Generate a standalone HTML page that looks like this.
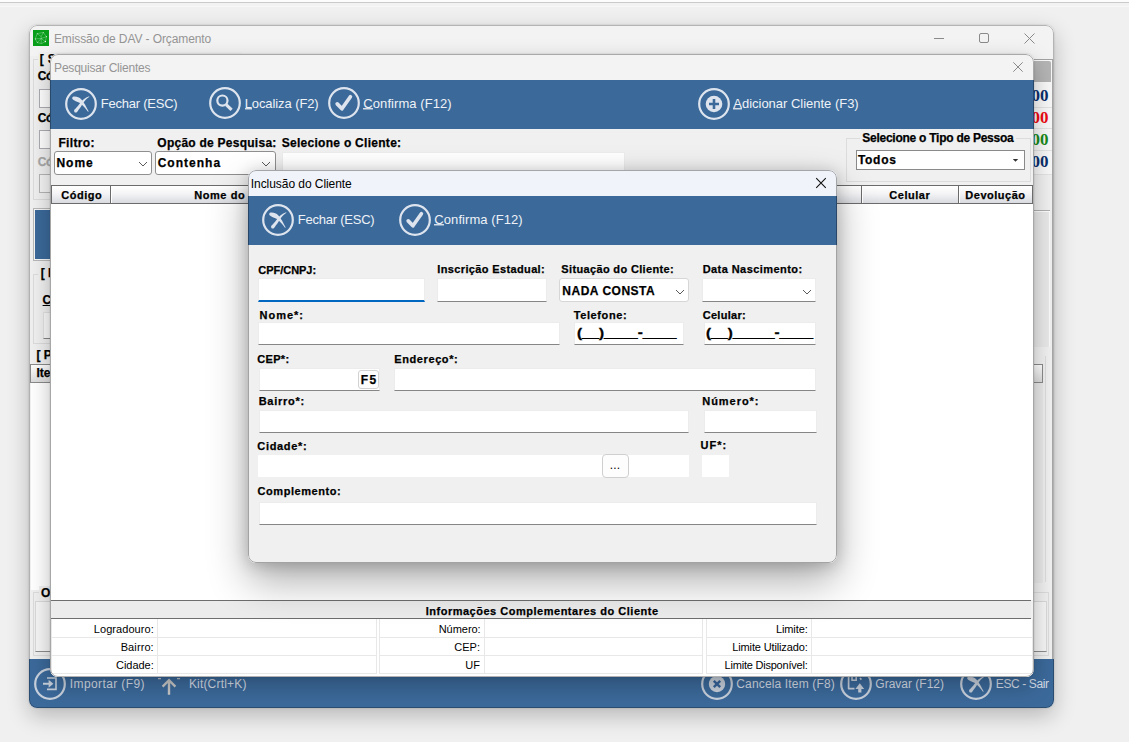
<!DOCTYPE html>
<html lang="pt-BR"><head><meta charset="utf-8"><title>Emissão de DAV - Orçamento</title>
<style>
html,body{margin:0;padding:0}
body{width:1129px;height:742px;overflow:hidden;background:#f0f0f0;position:relative;font-family:'Liberation Sans',sans-serif;}
.win{position:absolute;overflow:hidden;border-radius:8px;background:#f0f0f0}
.win>div,.win>svg,.win>span{position:absolute}
.sh{position:absolute;border-radius:8px}
.win>.bd{left:0;top:0;right:0;bottom:0;border:1px solid;border-radius:8px;box-sizing:border-box}
.t{white-space:pre;line-height:1;display:block}
u{text-decoration:none;background-image:linear-gradient(rgba(238,242,247,.85),rgba(238,242,247,.85)),linear-gradient(rgba(238,242,247,.4),rgba(238,242,247,.4));background-size:100% 1px,100% 1px;background-position:0 12px,0 13px;background-repeat:no-repeat}
</style></head><body>
<div style="position:absolute;left:0;top:0;width:1129px;height:2px;background:#fcfcfc"></div>
<div style="position:absolute;left:0;top:2px;width:1129px;height:1px;background:#cacaca"></div>
<div style="position:absolute;left:0;top:3px;width:1129px;height:3px;background:#f2f2f2"></div>
<div style="position:absolute;left:0;top:6px;width:1129px;height:1px;background:#f7f7f7"></div>
<div class="sh" style="left:29px;top:25px;width:1025px;height:683px;box-shadow:0 8px 22px rgba(0,0,0,.24),0 0 2px rgba(0,0,0,.2)"></div>
<div class="win" id="w1" style="left:29px;top:25px;width:1025px;height:683px">
<div style="left:0px;top:0px;width:1025px;height:31px;background:#f3f3f3"></div>
<svg style="left:4px;top:5px" width="16" height="16" viewBox="0 0 16 16"><rect width="16" height="16" fill="#089e1a"/><g fill="none" stroke="#fff" stroke-opacity=".38" stroke-width=".7"><path d="M4.2,3.6 L10.3,2.5 L13.4,6.6 L12.4,11.6 L8.3,13.6 L4.3,12.5 L2.2,8.9 Z"/><path d="M8.2,6.5 V13.4 M2.2,8.9 L8.2,8.5 L13.4,6.6 M8.2,8.5 L12.4,11.6 M4.2,3.6 L8.2,6.5 L10.3,2.5 M4.3,12.5 L8.2,8.5"/></g><g fill="#fff"><circle cx="12.4" cy="11.6" r=".65"/><circle cx="13.4" cy="6.6" r=".55" fill-opacity=".75"/><circle cx="4.3" cy="3.7" r=".55" fill-opacity=".6"/><circle cx="10.3" cy="2.6" r=".5" fill-opacity=".55"/><circle cx="2.4" cy="8.9" r=".6" fill-opacity=".5"/><circle cx="4.4" cy="12.4" r=".5" fill-opacity=".5"/></g></svg>
<span class="t" style="left:24.9px;top:8.0px;font-size:12px;letter-spacing:-0.098px;color:#959595;">Emissão de DAV - Orçamento</span>
<svg style="left:901px;top:4px" width="110" height="20" viewBox="0 0 110 20"><g stroke="#8a8a8a" stroke-width="1" fill="none"><path d="M4,9.5 H14"/><rect x="49.5" y="4.5" width="9" height="9" rx="1.5"/><path d="M94.5,4.5 L104.5,14.5 M104.5,4.5 L94.5,14.5"/></g></svg>
<div style="left:4px;top:34px;width:1016px;height:141px;border:1px solid #dcdcdc;box-sizing:border-box"></div>
<div style="left:9px;top:27px;width:204px;height:16px;background:#f0f0f0"></div>
<span class="t" style="left:10.8px;top:28.0px;font-size:12px;font-weight:bold;-webkit-text-stroke:.25px;letter-spacing:0.334px;color:#000;">[ Selecione o Vendedor / Cliente ]</span>
<span class="t" style="left:8.8px;top:45.0px;font-size:12px;font-weight:bold;-webkit-text-stroke:.25px;letter-spacing:-0.488px;color:#000;">Código:</span>
<div style="left:10px;top:64px;width:161px;height:18.5px;background:#fff;border:1px solid #abadb3;box-sizing:border-box"></div>
<span class="t" style="left:8.8px;top:87.0px;font-size:12px;font-weight:bold;-webkit-text-stroke:.25px;letter-spacing:-0.488px;color:#000;">Código:</span>
<div style="left:10px;top:105px;width:161px;height:18.5px;background:#fff;border:1px solid #abadb3;box-sizing:border-box"></div>
<span class="t" style="left:8.8px;top:131.0px;font-size:12px;font-weight:bold;-webkit-text-stroke:.25px;letter-spacing:-0.488px;color:#a8a8a8;">Código:</span>
<div style="left:10px;top:149px;width:161px;height:18.5px;background:#f4f4f4;border:1px solid #b5b5b5;box-sizing:border-box"></div>
<div style="left:4px;top:183px;width:997px;height:53px;background:#f6f6f6;border:1px solid #b8b8b8;box-sizing:border-box"></div>
<div style="left:6px;top:185px;width:993px;height:49px;background:#3b699a"></div>
<div style="left:4px;top:249px;width:1012px;height:70px;border:1px solid #dcdcdc;box-sizing:border-box"></div>
<div style="left:9px;top:241px;width:162px;height:16px;background:#f0f0f0"></div>
<span class="t" style="left:11.7px;top:242.0px;font-size:12px;font-weight:bold;-webkit-text-stroke:.25px;color:#000;">[ Produto ]</span>
<span class="t" style="left:13.6px;top:269.0px;font-size:12px;font-weight:bold;-webkit-text-stroke:.25px;color:#000;text-decoration:underline;">Código</span>
<div style="left:14px;top:287px;width:157px;height:27px;background:#fafafa;border:1px solid #e2e2e2;border-bottom-color:#868686;box-sizing:border-box"></div>
<span class="t" style="left:7.4px;top:324.0px;font-size:12px;font-weight:bold;-webkit-text-stroke:.25px;color:#000;">[ Produtos ]</span>
<div style="left:1015px;top:331px;width:2px;height:226px;border-right:1px solid #dcdcdc;box-sizing:border-box"></div>
<div style="left:1px;top:339px;width:1013px;height:19px;background:linear-gradient(#fff,#dcdcdc);border:1px solid #8a8a8a;box-sizing:border-box"></div>
<span class="t" style="left:7.4px;top:342.0px;font-size:12px;font-weight:bold;-webkit-text-stroke:.25px;color:#000;">Item</span>
<div style="left:2px;top:358px;width:1002px;height:207px;background:#fff"></div>
<div style="left:1004px;top:358px;width:10px;height:200px;background:#e9e9e9"></div>
<div style="left:1004px;top:31px;width:21px;height:3px;background:#f3f3f3"></div>
<div style="left:1004px;top:34px;width:20px;height:1px;background:#a2a2a2"></div>
<div style="left:1004px;top:35px;width:19px;height:151px;background:#f8f8f8"></div>
<div style="left:1023px;top:35px;width:1px;height:599px;background:#a6a6a6"></div>
<div style="left:1004px;top:36px;width:17.5px;height:21px;background:#b4b4b4;border-radius:0 2px 0 0"></div>
<span class="t" style="left:989.8px;top:62.0px;font-size:17px;font-weight:bold;color:#0b2f6b;font-family:'Liberation Serif',serif;">0,00</span>
<span class="t" style="left:989.8px;top:84.0px;font-size:17px;font-weight:bold;color:#ee0a12;font-family:'Liberation Serif',serif;">0,00</span>
<span class="t" style="left:989.8px;top:106.0px;font-size:17px;font-weight:bold;color:#1a8a1a;font-family:'Liberation Serif',serif;">0,00</span>
<span class="t" style="left:989.8px;top:128.0px;font-size:17px;font-weight:bold;color:#0b2f6b;font-family:'Liberation Serif',serif;">0,00</span>
<div style="left:1004px;top:82px;width:19px;height:1px;background:#e3e3e3"></div>
<div style="left:1004px;top:103px;width:19px;height:1px;background:#e3e3e3"></div>
<div style="left:1004px;top:125px;width:19px;height:1px;background:#e3e3e3"></div>
<div style="left:1004px;top:149px;width:19px;height:1px;background:#e3e3e3"></div>
<div style="left:1004px;top:150px;width:19px;height:36px;background:#f0f0f0"></div>
<div style="left:1004px;top:185px;width:17px;height:2px;border-top:1px solid #b0b0b0;border-bottom:1px solid #fdfdfd;box-sizing:border-box"></div>
<div style="left:1004px;top:187px;width:17px;height:135px;background:#e8e8e8;border-right:1px solid #fafafa;box-sizing:border-box"></div>
<div style="left:4px;top:567px;width:1016px;height:64px;border:1px solid #dcdcdc;box-sizing:border-box"></div>
<div style="left:10px;top:561px;width:81px;height:14px;background:#f0f0f0"></div>
<span class="t" style="left:11.9px;top:562.0px;font-size:12px;font-weight:bold;-webkit-text-stroke:.25px;color:#000;">Observação</span>
<div style="left:6px;top:576px;width:1012px;height:51px;background:#f6f6f6;border:1px solid #d9d9d9;border-bottom-color:#8c8c8c;box-sizing:border-box"></div>
<div style="left:0px;top:634px;width:1025px;height:49px;background:#3b699a"></div>
<svg style="left:3.9px;top:642px" width="34" height="34" viewBox="0 0 34 34"><circle cx="17" cy="17" r="14.8" fill="none" stroke="#c7d0dc" stroke-width="2.2"/><path d="M14,11 H23 V22.4 H14" fill="none" stroke="#c7d0dc" stroke-width="1.6"/><path d="M10,16.8 H16" stroke="#c7d0dc" stroke-width="2"/><path d="M15.6,12.8 L20.4,16.8 L15.6,20.8 Z" fill="#c7d0dc"/></svg>
<span class="t" style="left:40.8px;top:653.0px;font-size:12px;letter-spacing:0.390px;color:#d3dbe6;">Importar (F9)</span>
<svg style="left:127px;top:651px" width="26" height="22" viewBox="0 0 26 22"><path d="M13,18.8 V4 M6.6,10.6 L13,4.2 L19.4,10.6" fill="none" stroke="#c8c8c8" stroke-width="2.4"/><path d="M2,2.6 H5 M21,2.6 H24" stroke="#b9c0c9" stroke-width="1.2"/></svg>
<span class="t" style="left:159.9px;top:653.0px;font-size:12px;letter-spacing:0.183px;color:#d3dbe6;">Kit(Crtl+K)</span>
<svg style="left:671px;top:642px" width="34" height="34" viewBox="0 0 34 34"><circle cx="17" cy="17" r="14.8" fill="none" stroke="#c7d0dc" stroke-width="2.2"/><circle cx="17" cy="17" r="8.2" fill="#c7d0dc"/><path d="M13.8,13.8 L20.2,20.2 M20.2,13.8 L13.8,20.2" stroke="#37649a" stroke-width="2.4"/></svg>
<span class="t" style="left:707.3px;top:653.0px;font-size:12px;letter-spacing:0.148px;color:#d3dbe6;">Cancela Item (F8)</span>
<svg style="left:810px;top:642px" width="34" height="34" viewBox="0 0 34 34"><circle cx="17" cy="17" r="14.8" fill="none" stroke="#c7d0dc" stroke-width="2.2"/><path d="M18.5,9.2 H9.6 V21.6 H15.5" fill="none" stroke="#c7d0dc" stroke-width="1.7" stroke-linejoin="round"/><path d="M13,9.5 V13.2 H17.2 V9.5" fill="none" stroke="#c7d0dc" stroke-width="1.5"/><path d="M21,11 L22.4,12.6" stroke="#c7d0dc" stroke-width="1.6"/><path d="M20.8,16.2 L25.2,22 H22.4 V25.6 H19.2 V22 H16.4 Z" fill="#c7d0dc"/></svg>
<span class="t" style="left:846.3px;top:653.0px;font-size:12px;color:#d3dbe6;">Gravar (F12)</span>
<svg style="left:930px;top:642px" width="34" height="34" viewBox="0 0 34 34"><circle cx="17" cy="17" r="14.8" fill="none" stroke="#c7d0dc" stroke-width="2.2"/><path fill="#c7d0dc" d="M8.2,11 C8.4,9.8 9.4,9.5 10.4,9.5 C12,9.5 13.4,9.7 14.8,10.4 C16.2,11.1 17.2,12 18.2,13.4 C19.4,15 20.2,16.2 21,17.6 C22.2,19.8 23.4,22.2 24.7,24.5 L24,24.8 C22.8,23.2 21.8,22 20.6,20.6 C19.4,19.2 18.4,18 17.2,16.9 C16,16 15,15.4 13.6,14.9 C12.4,14.4 11.2,14 10,13.3 C9,12.7 8.1,12 8.2,11 Z"/><path fill="#c7d0dc" d="M25.1,9.2 C22.8,10 20.8,11.2 19,12.8 C17.9,13.8 17.1,14.8 16.4,15.8 C15.6,16.9 14.8,17.9 13.9,18.9 C12.7,20.3 11.3,21.6 10.5,22.6 C10,23.3 9.9,24 10.3,24.7 C10.7,25.5 11.6,25.9 12.4,25.4 C13,25 13.3,24.7 13.6,24.2 C14.6,22.9 15.4,21.8 16.4,20.5 C17.4,19 18.2,17.6 19.2,16.1 C20.6,14 22.6,11.6 25.4,9.7 Z"/></svg>
<span class="t" style="left:966.8px;top:653.0px;font-size:12px;letter-spacing:-0.388px;color:#d3dbe6;">ESC - Sair</span>
<div class="bd" style="border-color:rgba(0,0,0,.26)"></div>
</div>
<div class="sh" style="left:50px;top:54px;width:984px;height:623px;box-shadow:0 8px 22px rgba(0,0,0,.26),0 0 2px rgba(0,0,0,.2)"></div>
<div class="win" id="w2" style="left:50px;top:54px;width:984px;height:623px">
<div style="left:0px;top:0px;width:984px;height:26px;background:#f3f3f3"></div>
<span class="t" style="left:4.1px;top:8.0px;font-size:12px;letter-spacing:-0.215px;color:#959595;">Pesquisar Clientes</span>
<svg style="left:962px;top:7px" width="12" height="12" viewBox="0 0 12 12"><path d="M1.3,1.3 L10.7,10.7 M10.7,1.3 L1.3,10.7" stroke="#8a8a8a" stroke-width="1"/></svg>
<div style="left:0px;top:26px;width:984px;height:49px;background:#3b699a"></div>
<svg style="left:14.1px;top:32.8px" width="34" height="34" viewBox="0 0 34 34"><circle cx="17" cy="17" r="14.8" fill="none" stroke="#dde4ee" stroke-width="2.2"/><path fill="#dde4ee" d="M8.2,11 C8.4,9.8 9.4,9.5 10.4,9.5 C12,9.5 13.4,9.7 14.8,10.4 C16.2,11.1 17.2,12 18.2,13.4 C19.4,15 20.2,16.2 21,17.6 C22.2,19.8 23.4,22.2 24.7,24.5 L24,24.8 C22.8,23.2 21.8,22 20.6,20.6 C19.4,19.2 18.4,18 17.2,16.9 C16,16 15,15.4 13.6,14.9 C12.4,14.4 11.2,14 10,13.3 C9,12.7 8.1,12 8.2,11 Z"/><path fill="#dde4ee" d="M25.1,9.2 C22.8,10 20.8,11.2 19,12.8 C17.9,13.8 17.1,14.8 16.4,15.8 C15.6,16.9 14.8,17.9 13.9,18.9 C12.7,20.3 11.3,21.6 10.5,22.6 C10,23.3 9.9,24 10.3,24.7 C10.7,25.5 11.6,25.9 12.4,25.4 C13,25 13.3,24.7 13.6,24.2 C14.6,22.9 15.4,21.8 16.4,20.5 C17.4,19 18.2,17.6 19.2,16.1 C20.6,14 22.6,11.6 25.4,9.7 Z"/></svg>
<span class="t" style="left:50.7px;top:43.0px;font-size:13px;letter-spacing:-0.224px;color:#eef2f7;">Fechar (ESC)</span>
<svg style="left:158.2px;top:32.1px" width="34" height="34" viewBox="0 0 34 34"><circle cx="17" cy="17" r="14.8" fill="none" stroke="#dde4ee" stroke-width="2.2"/><circle cx="14.4" cy="14.6" r="5.1" fill="none" stroke="#dde4ee" stroke-width="2.2"/><path d="M18.4,18.8 L23.6,23.8" stroke="#dde4ee" stroke-width="3.2" stroke-linecap="butt"/></svg>
<span class="t" style="left:194.7px;top:43.0px;font-size:13px;letter-spacing:-0.095px;color:#eef2f7;"><u>L</u>ocaliza (F2)</span>
<svg style="left:277px;top:32.1px" width="34" height="34" viewBox="0 0 34 34"><circle cx="17" cy="17" r="14.8" fill="none" stroke="#dde4ee" stroke-width="2.2"/><path d="M10.2,17.9 L14.9,22.8 L23.4,10.7" fill="none" stroke="#dde4ee" stroke-width="3.7" stroke-linecap="round" stroke-linejoin="round"/></svg>
<span class="t" style="left:313.3px;top:43.0px;font-size:13px;letter-spacing:0.075px;color:#eef2f7;"><u>C</u>onfirma (F12)</span>
<svg style="left:646.9px;top:32.9px" width="34" height="34" viewBox="0 0 34 34"><circle cx="17" cy="17" r="14.8" fill="none" stroke="#dde4ee" stroke-width="2.2"/><circle cx="17" cy="17" r="8.3" fill="#dde4ee"/><path d="M12,17 H22 M17,12 V22" stroke="#3b699a" stroke-width="2.6"/></svg>
<span class="t" style="left:683.3px;top:43.0px;font-size:13px;letter-spacing:-0.015px;color:#eef2f7;"><u>A</u>dicionar Cliente (F3)</span>
<div style="left:0px;top:75px;width:984px;height:56px;background:#f0f0f0"></div>
<span class="t" style="left:8.4px;top:83.0px;font-size:12px;font-weight:bold;-webkit-text-stroke:.25px;letter-spacing:0.350px;color:#000;">Filtro:</span>
<div style="left:4px;top:97px;width:98px;height:24px;background:#fff;border:1px solid #8f8f8f;border-radius:3px;box-sizing:border-box"></div>
<span class="t" style="left:6.4px;top:103.0px;font-size:12px;font-weight:bold;-webkit-text-stroke:.25px;letter-spacing:1.019px;color:#000;">Nome</span>
<svg style="left:88px;top:107px" width="10" height="6" viewBox="0 0 10 6"><path d="M1,1 L5,5 L9,1" fill="none" stroke="#5a5a5a" stroke-width="1"/></svg>
<span class="t" style="left:107.3px;top:83.0px;font-size:12px;font-weight:bold;-webkit-text-stroke:.25px;letter-spacing:0.253px;color:#000;">Opção de Pesquisa:</span>
<div style="left:105px;top:97px;width:121px;height:24px;background:#fff;border:1px solid #8f8f8f;border-radius:3px;box-sizing:border-box"></div>
<span class="t" style="left:107.7px;top:103.0px;font-size:12px;font-weight:bold;-webkit-text-stroke:.25px;letter-spacing:1.008px;color:#000;">Contenha</span>
<svg style="left:211px;top:107px" width="10" height="6" viewBox="0 0 10 6"><path d="M1,1 L5,5 L9,1" fill="none" stroke="#5a5a5a" stroke-width="1"/></svg>
<span class="t" style="left:231.7px;top:83.0px;font-size:12px;font-weight:bold;-webkit-text-stroke:.25px;letter-spacing:0.283px;color:#000;">Selecione o Cliente:</span>
<div style="left:232px;top:98px;width:343px;height:23px;background:#fff;border:1px solid #ececec;box-sizing:border-box"></div>
<div style="left:796px;top:84px;width:185px;height:44px;border:1px solid #dcdcdc;box-sizing:border-box"></div>
<div style="left:810px;top:77px;width:156px;height:15px;background:#f0f0f0"></div>
<span class="t" style="left:812.3px;top:78.0px;font-size:12px;font-weight:bold;-webkit-text-stroke:.25px;letter-spacing:-0.258px;color:#000;">Selecione o Tipo de Pessoa</span>
<div style="left:806px;top:96px;width:169px;height:20px;background:#fff;border:1px solid #8a8a8a;box-sizing:border-box"></div>
<span class="t" style="left:807.9px;top:100.0px;font-size:12px;font-weight:bold;-webkit-text-stroke:.25px;letter-spacing:0.723px;color:#000;">Todos</span>
<svg style="left:962px;top:104px" width="7" height="5" viewBox="0 0 7 5"><path d="M0.8,1 H6.2 L3.5,3.8 Z" fill="#333"/></svg>
<div style="left:1px;top:131px;width:982px;height:19px;background:linear-gradient(#ffffff,#f4f4f6 45%,#d9dbe0);border-top:1px solid #6b6b6b;border-bottom:1px solid #6b6b6b;border-left:1px solid #6b6b6b;box-sizing:border-box"></div>
<div style="left:60px;top:132px;width:2px;height:17px;border-left:1px solid #6b6b6b;border-right:1px solid #fff;box-sizing:border-box"></div>
<div style="left:322px;top:132px;width:2px;height:17px;border-left:1px solid #6b6b6b;border-right:1px solid #fff;box-sizing:border-box"></div>
<div style="left:510px;top:132px;width:2px;height:17px;border-left:1px solid #6b6b6b;border-right:1px solid #fff;box-sizing:border-box"></div>
<div style="left:650px;top:132px;width:2px;height:17px;border-left:1px solid #6b6b6b;border-right:1px solid #fff;box-sizing:border-box"></div>
<div style="left:811px;top:132px;width:2px;height:17px;border-left:1px solid #6b6b6b;border-right:1px solid #fff;box-sizing:border-box"></div>
<div style="left:908px;top:132px;width:2px;height:17px;border-left:1px solid #6b6b6b;border-right:1px solid #fff;box-sizing:border-box"></div>
<div style="left:982px;top:132px;width:2px;height:17px;border-left:1px solid #6b6b6b;border-right:1px solid #fff;box-sizing:border-box"></div>
<span class="t" style="left:11.3px;top:135.5px;font-size:11px;font-weight:bold;-webkit-text-stroke:.25px;letter-spacing:0.502px;color:#000;">Código</span>
<span class="t" style="left:144.3px;top:135.5px;font-size:11px;font-weight:bold;-webkit-text-stroke:.25px;letter-spacing:0.543px;color:#000;">Nome do Cliente</span>
<span class="t" style="left:839.3px;top:135.5px;font-size:11px;font-weight:bold;-webkit-text-stroke:.25px;letter-spacing:0.517px;color:#000;">Celular</span>
<span class="t" style="left:915.3px;top:135.5px;font-size:11px;font-weight:bold;-webkit-text-stroke:.25px;letter-spacing:0.520px;color:#000;">Devolução</span>
<div style="left:1px;top:150px;width:982px;height:396px;background:#fff"></div>
<div style="left:1px;top:546px;width:980px;height:19px;background:#ececec;border-top:1px solid #6e6e6e;border-bottom:1px solid #6e6e6e;box-sizing:border-box"></div>
<span class="t" style="left:375.7px;top:551.5px;font-size:11px;font-weight:bold;-webkit-text-stroke:.25px;letter-spacing:0.512px;color:#000;">Informações Complementares do Cliente</span>
<div style="left:1px;top:565px;width:982px;height:59px;background:#fff"></div>
<div style="left:1px;top:565px;width:326px;height:55px;border:1px solid #e8e8e8;border-top:none;box-sizing:border-box"></div>
<div style="left:107px;top:565px;width:1px;height:54px;background:#e8e8e8"></div>
<div style="left:1px;top:583px;width:326px;height:1px;background:#e8e8e8"></div>
<div style="left:1px;top:601px;width:326px;height:1px;background:#e8e8e8"></div>
<div style="left:329px;top:565px;width:324px;height:55px;border:1px solid #e8e8e8;border-top:none;box-sizing:border-box"></div>
<div style="left:434px;top:565px;width:1px;height:54px;background:#e8e8e8"></div>
<div style="left:329px;top:583px;width:324px;height:1px;background:#e8e8e8"></div>
<div style="left:329px;top:601px;width:324px;height:1px;background:#e8e8e8"></div>
<div style="left:656px;top:565px;width:327px;height:55px;border:1px solid #e8e8e8;border-top:none;box-sizing:border-box"></div>
<div style="left:761px;top:565px;width:1px;height:54px;background:#e8e8e8"></div>
<div style="left:656px;top:583px;width:327px;height:1px;background:#e8e8e8"></div>
<div style="left:656px;top:601px;width:327px;height:1px;background:#e8e8e8"></div>
<span class="t" style="left:43.8px;top:569.5px;font-size:11px;letter-spacing:0.057px;color:#000;">Logradouro:</span>
<span class="t" style="left:70.7px;top:587.5px;font-size:11px;letter-spacing:0.099px;color:#000;">Bairro:</span>
<span class="t" style="left:66.0px;top:605.5px;font-size:11px;letter-spacing:-0.037px;color:#000;">Cidade:</span>
<span class="t" style="left:388.7px;top:569.5px;font-size:11px;letter-spacing:-0.031px;color:#000;">Número:</span>
<span class="t" style="left:404.3px;top:587.5px;font-size:11px;color:#000;">CEP:</span>
<span class="t" style="left:415.3px;top:605.5px;font-size:11px;color:#000;">UF</span>
<span class="t" style="left:726.0px;top:569.5px;font-size:11px;letter-spacing:-0.118px;color:#000;">Limite:</span>
<span class="t" style="left:682.3px;top:587.5px;font-size:11px;letter-spacing:-0.140px;color:#000;">Limite Utilizado:</span>
<span class="t" style="left:674.6px;top:605.5px;font-size:11px;letter-spacing:-0.219px;color:#000;">Limite Disponível:</span>
<div class="bd" style="border-color:rgba(0,0,0,.30)"></div>
</div>
<div class="sh" style="left:248px;top:170px;width:589px;height:393px;box-shadow:0 18px 40px rgba(0,0,0,.32),0 2px 16px rgba(0,0,0,.2)"></div>
<div class="win" id="w3" style="left:248px;top:170px;width:589px;height:393px">
<div style="left:0px;top:0px;width:589px;height:26px;background:#f0f3f9"></div>
<span class="t" style="left:2.8px;top:8.0px;font-size:12px;letter-spacing:-0.060px;color:#000;">Inclusão do Cliente</span>
<svg style="left:567px;top:7px" width="12" height="12" viewBox="0 0 12 12"><path d="M1.2,1.2 L10.8,10.8 M10.8,1.2 L1.2,10.8" stroke="#111" stroke-width="1.1"/></svg>
<div style="left:0px;top:26px;width:589px;height:48.5px;background:#3b699a"></div>
<svg style="left:13px;top:33px" width="34" height="34" viewBox="0 0 34 34"><circle cx="17" cy="17" r="14.8" fill="none" stroke="#dde4ee" stroke-width="2.2"/><path fill="#dde4ee" d="M8.2,11 C8.4,9.8 9.4,9.5 10.4,9.5 C12,9.5 13.4,9.7 14.8,10.4 C16.2,11.1 17.2,12 18.2,13.4 C19.4,15 20.2,16.2 21,17.6 C22.2,19.8 23.4,22.2 24.7,24.5 L24,24.8 C22.8,23.2 21.8,22 20.6,20.6 C19.4,19.2 18.4,18 17.2,16.9 C16,16 15,15.4 13.6,14.9 C12.4,14.4 11.2,14 10,13.3 C9,12.7 8.1,12 8.2,11 Z"/><path fill="#dde4ee" d="M25.1,9.2 C22.8,10 20.8,11.2 19,12.8 C17.9,13.8 17.1,14.8 16.4,15.8 C15.6,16.9 14.8,17.9 13.9,18.9 C12.7,20.3 11.3,21.6 10.5,22.6 C10,23.3 9.9,24 10.3,24.7 C10.7,25.5 11.6,25.9 12.4,25.4 C13,25 13.3,24.7 13.6,24.2 C14.6,22.9 15.4,21.8 16.4,20.5 C17.4,19 18.2,17.6 19.2,16.1 C20.6,14 22.6,11.6 25.4,9.7 Z"/></svg>
<span class="t" style="left:49.7px;top:43.0px;font-size:13px;letter-spacing:-0.224px;color:#eef2f7;">Fechar (ESC)</span>
<svg style="left:149.7px;top:33px" width="34" height="34" viewBox="0 0 34 34"><circle cx="17" cy="17" r="14.8" fill="none" stroke="#dde4ee" stroke-width="2.2"/><path d="M10.2,17.9 L14.9,22.8 L23.4,10.7" fill="none" stroke="#dde4ee" stroke-width="3.7" stroke-linecap="round" stroke-linejoin="round"/></svg>
<span class="t" style="left:186.3px;top:43.0px;font-size:13px;letter-spacing:0.075px;color:#eef2f7;"><u>C</u>onfirma (F12)</span>
<span class="t" style="left:10.3px;top:94.5px;font-size:11px;font-weight:bold;-webkit-text-stroke:.25px;letter-spacing:-0.033px;color:#000;">CPF/CNPJ:</span>
<span class="t" style="left:189.3px;top:93.5px;font-size:11px;font-weight:bold;-webkit-text-stroke:.25px;letter-spacing:0.363px;color:#000;">Inscrição Estadual:</span>
<span class="t" style="left:313.3px;top:93.5px;font-size:11px;font-weight:bold;-webkit-text-stroke:.25px;letter-spacing:0.350px;color:#000;">Situação do Cliente:</span>
<span class="t" style="left:454.7px;top:93.5px;font-size:11px;font-weight:bold;-webkit-text-stroke:.25px;letter-spacing:0.432px;color:#000;">Data Nascimento:</span>
<div style="left:10px;top:108px;width:167px;height:23.5px;background:#fff;border:1px solid #ececec;border-bottom:2px solid #0067c0;box-sizing:border-box"></div>
<div style="left:188.5px;top:108px;width:110.5px;height:24px;background:#fff;border:1px solid #ececec;border-bottom-color:#868686;box-sizing:border-box"></div>
<div style="left:311px;top:108px;width:129.5px;height:24px;background:#fff;border:1px solid #d6d6d6;border-radius:3px;box-sizing:border-box"></div>
<span class="t" style="left:314.3px;top:115.0px;font-size:12px;font-weight:bold;-webkit-text-stroke:.25px;letter-spacing:0.507px;color:#000;">NADA CONSTA</span>
<svg style="left:427px;top:118.5px" width="10" height="6" viewBox="0 0 10 6"><path d="M1,1 L5,5 L9,1" fill="none" stroke="#5a5a5a" stroke-width="1"/></svg>
<div style="left:454px;top:108px;width:113.5px;height:24px;background:#fff;border:1px solid #ececec;border-bottom-color:#868686;box-sizing:border-box"></div>
<svg style="left:554px;top:118.5px" width="10" height="6" viewBox="0 0 10 6"><path d="M1,1 L5,5 L9,1" fill="none" stroke="#5a5a5a" stroke-width="1"/></svg>
<span class="t" style="left:11.6px;top:139.5px;font-size:11px;font-weight:bold;-webkit-text-stroke:.25px;letter-spacing:0.977px;color:#000;">Nome*:</span>
<span class="t" style="left:325.7px;top:139.5px;font-size:11px;font-weight:bold;-webkit-text-stroke:.25px;letter-spacing:0.615px;color:#000;">Telefone:</span>
<span class="t" style="left:454.7px;top:139.5px;font-size:11px;font-weight:bold;-webkit-text-stroke:.25px;letter-spacing:0.290px;color:#000;">Celular:</span>
<div style="left:10px;top:152px;width:302px;height:22.5px;background:#fff;border:1px solid #ececec;border-bottom-color:#868686;box-sizing:border-box"></div>
<div style="left:326px;top:152px;width:109.5px;height:22.5px;background:#fff;border:1px solid #ececec;border-bottom-color:#868686;box-sizing:border-box"></div>
<span class="t" style="left:329.0px;top:156.0px;font-size:13px;font-weight:bold;color:#000;transform:scaleX(1.1665);transform-origin:0 0;-webkit-text-stroke:.35px #000;">(__)____-____</span>
<div style="left:455.5px;top:152px;width:112.5px;height:22.5px;background:#fff;border:1px solid #ececec;border-bottom-color:#868686;box-sizing:border-box"></div>
<span class="t" style="left:458.0px;top:156.0px;font-size:13px;font-weight:bold;color:#000;transform:scaleX(1.1564);transform-origin:0 0;-webkit-text-stroke:.35px #000;">(__)_____-____</span>
<span class="t" style="left:9.3px;top:183.5px;font-size:11px;font-weight:bold;-webkit-text-stroke:.25px;letter-spacing:0.309px;color:#000;">CEP*:</span>
<span class="t" style="left:146.3px;top:183.5px;font-size:11px;font-weight:bold;-webkit-text-stroke:.25px;letter-spacing:0.591px;color:#000;">Endereço*:</span>
<div style="left:11px;top:198px;width:121px;height:22.5px;background:#fff;border:1px solid #ececec;border-bottom-color:#868686;box-sizing:border-box"></div>
<div style="left:110px;top:199.5px;width:20.5px;height:19px;background:#fdfdfd;border:1px solid #d2d2d2;border-radius:3px;box-sizing:border-box"></div>
<span class="t" style="left:112.8px;top:204.0px;font-size:12px;font-weight:bold;-webkit-text-stroke:.25px;letter-spacing:1.384px;color:#000;">F5</span>
<div style="left:145.5px;top:198px;width:422px;height:22.5px;background:#fff;border:1px solid #ececec;border-bottom-color:#868686;box-sizing:border-box"></div>
<span class="t" style="left:10.7px;top:225.5px;font-size:11px;font-weight:bold;-webkit-text-stroke:.25px;letter-spacing:0.722px;color:#000;">Bairro*:</span>
<span class="t" style="left:454.3px;top:225.5px;font-size:11px;font-weight:bold;-webkit-text-stroke:.25px;letter-spacing:0.955px;color:#000;">Número*:</span>
<div style="left:11px;top:240px;width:429.5px;height:22.5px;background:#fff;border:1px solid #ececec;border-bottom-color:#868686;box-sizing:border-box"></div>
<div style="left:455.5px;top:240px;width:113px;height:22.5px;background:#fff;border:1px solid #ececec;border-bottom-color:#868686;box-sizing:border-box"></div>
<span class="t" style="left:9.3px;top:270.5px;font-size:11px;font-weight:bold;-webkit-text-stroke:.25px;letter-spacing:0.682px;color:#000;">Cidade*:</span>
<span class="t" style="left:452.5px;top:269.5px;font-size:11px;font-weight:bold;-webkit-text-stroke:.25px;letter-spacing:1.030px;color:#000;">UF*:</span>
<div style="left:10px;top:285px;width:430.5px;height:21.5px;background:#fff"></div>
<div style="left:353.5px;top:283.5px;width:27px;height:24px;background:#fdfdfd;border:1px solid #cfcfcf;border-radius:4px;box-sizing:border-box"></div>
<span class="t" style="left:361.8px;top:289.0px;font-size:12px;letter-spacing:0.192px;color:#000;">...</span>
<div style="left:454px;top:284.5px;width:27px;height:22px;background:#fff"></div>
<span class="t" style="left:9.6px;top:315.5px;font-size:11px;font-weight:bold;-webkit-text-stroke:.25px;letter-spacing:0.555px;color:#000;">Complemento:</span>
<div style="left:10.5px;top:332px;width:558px;height:23px;background:#fff;border:1px solid #ececec;border-bottom-color:#868686;box-sizing:border-box"></div>
<div class="bd" style="border-color:rgba(0,0,0,.32)"></div>
</div>
</body></html>
